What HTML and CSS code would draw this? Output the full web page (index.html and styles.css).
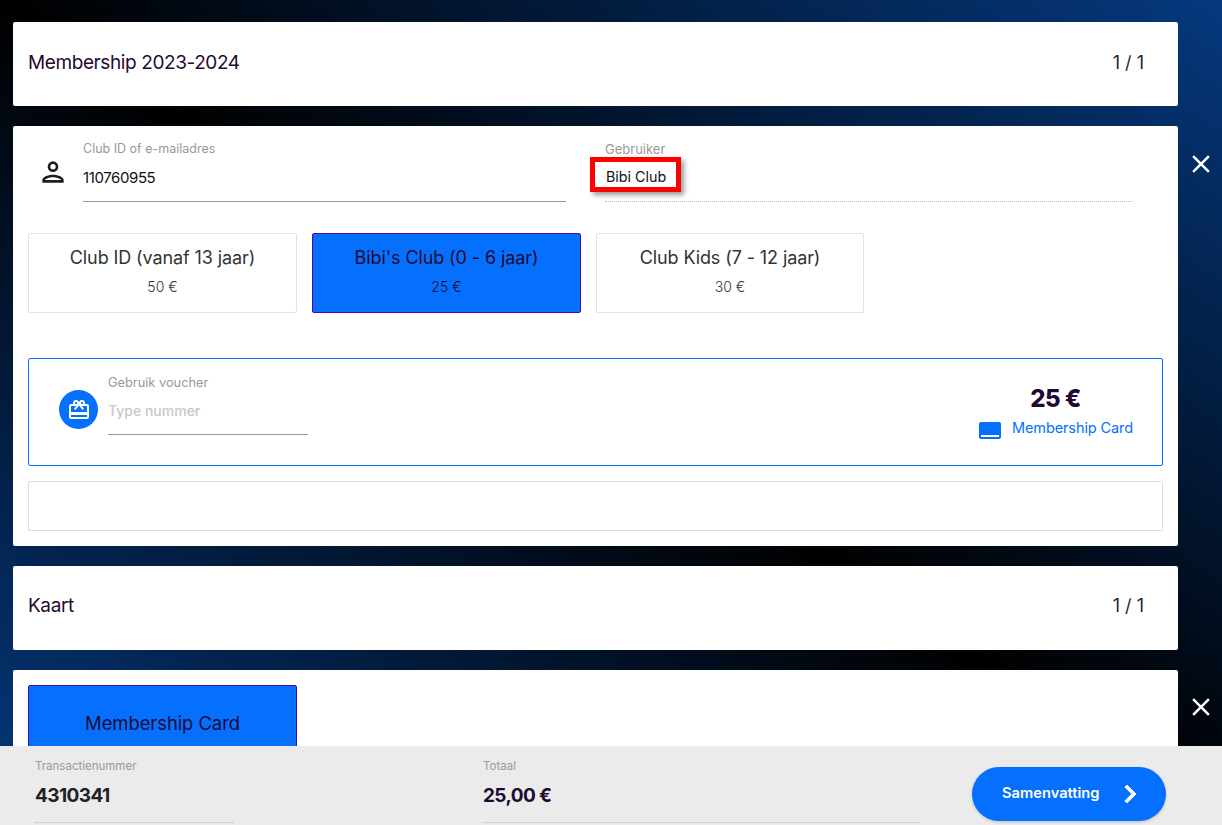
FILE: index.html
```html
<!DOCTYPE html>
<html lang="nl">
<head>
  <meta charset="UTF-8" />
  <title>Membership</title>
  <link rel="stylesheet" href="styles.css">
</head>
<body>

  <div class="content">

    <div class="card section-head">
      <span class="section-title">Membership 2023-2024</span>
      <span class="section-count">1 / 1</span>
    </div>

    <div class="row">
      <div class="card panel">
        <div class="user-row">
          <svg class="person-icon" viewBox="0 0 24 24" width="32" height="32">
            <path fill="#1d1d1d" d="M12 6a2 2 0 1 1 0 4 2 2 0 0 1 0-4m0 10c2.7 0 5.8 1.29 6 2H6c.23-.72 3.31-2 6-2M12 4a4 4 0 1 0 0 8 4 4 0 0 0 0-8zm0 10c-2.67 0-8 1.34-8 4v2h16v-2c0-2.66-5.33-4-8-4z"/>
          </svg>
          <div class="field field-id">
            <label>Club ID of e-mailadres</label>
            <div class="field-value">110760955</div>
          </div>
          <div class="field field-user">
            <label>Gebruiker</label>
            <div class="field-value"><span class="marked">Bibi Club</span></div>
          </div>
        </div>

        <div class="options">
          <div class="option">
            <div class="option-name">Club ID (vanaf 13 jaar)</div>
            <div class="option-price">50 €</div>
          </div>
          <div class="option selected">
            <div class="option-name">Bibi's Club (0 - 6 jaar)</div>
            <div class="option-price">25 €</div>
          </div>
          <div class="option">
            <div class="option-name">Club Kids (7 - 12 jaar)</div>
            <div class="option-price">30 €</div>
          </div>
        </div>

        <div class="voucher">
          <div class="voucher-icon">
            <svg viewBox="0 0 24 24" width="24" height="24">
              <path fill="#fff" d="M20 6h-2.2c.1-.3.2-.7.2-1 0-1.7-1.3-3-3-3-1 0-1.9.5-2.5 1.300L12 4l-.5-.7C10.900 2.500 10 2 9 2 7.300 2 6 3.300 6 5c0 .3.100.7.200 1H4c-1.100 0-2 .9-2 2v11c0 1.100.9 2 2 2h16c1.100 0 2-.9 2-2V8c0-1.100-.9-2-2-2zM15 4c.6 0 1 .4 1 1s-.4 1-1 1-1-.4-1-1 .4-1 1-1zM9 4c.6 0 1 .4 1 1s-.4 1-1 1-1-.4-1-1 .4-1 1-1zm11 15H4v-2h16v2zm0-5H4V8h5.100L7 10.800 8.600 12 12 7.400 15.400 12l1.600-1.200L14.900 8H20v6z"/>
            </svg>
          </div>
          <div class="voucher-field">
            <label>Gebruik voucher</label>
            <div class="voucher-input">Type nummer</div>
          </div>
          <div class="voucher-total">
            <div class="voucher-price">25 €</div>
            <div class="voucher-type">
              <svg viewBox="0 0 24 24" width="24" height="24">
                <path fill="#0570fe" d="M21 4H3c-1.100 0-2 .9-2 2v13c0 1.100.9 2 2 2h18c1.100 0 2-.9 2-2V6c0-1.100-.9-2-2-2zm0 15H3v-2h18v2z"/>
              </svg>
              <span>Membership Card</span>
            </div>
          </div>
        </div>

        <div class="note-box"></div>
      </div>
      <svg class="close-icon" viewBox="0 0 24 24" width="30" height="30">
        <path fill="#fff" d="M19 6.410 17.590 5 12 10.590 6.410 5 5 6.410 10.590 12 5 17.590 6.410 19 12 13.410 17.590 19 19 17.590 13.410 12z"/>
      </svg>
    </div>

    <div class="card section-head section-kaart">
      <span class="section-title">Kaart</span>
      <span class="section-count">1 / 1</span>
    </div>

    <div class="row">
      <div class="card panel panel-card">
        <div class="option selected card-option">
          <div class="option-name">Membership Card</div>
        </div>
      </div>
      <svg class="close-icon" viewBox="0 0 24 24" width="30" height="30">
        <path fill="#fff" d="M19 6.410 17.590 5 12 10.590 6.410 5 5 6.410 10.590 12 5 17.590 6.410 19 12 13.410 17.590 19 19 17.590 13.410 12z"/>
      </svg>
    </div>

  </div>

  <div class="footer">
    <div class="footer-field footer-nr">
      <label>Transactienummer</label>
      <div class="footer-value">4310341</div>
    </div>
    <div class="footer-field footer-total">
      <label>Totaal</label>
      <div class="footer-value purple">25,00 €</div>
    </div>
    <button class="next-btn">
      <span>Samenvatting</span>
      <svg viewBox="0 0 24 24" width="36" height="36">
        <path fill="#fff" stroke="#fff" stroke-width="0.6" d="M10 6 8.590 7.410 13.170 12l-4.580 4.590L10 18l6-6z"/>
      </svg>
    </button>
  </div>

</body>
</html>
```

FILE: styles.css
```css
html, body {
  height: 100%;
  margin: 0;
  overflow: hidden;
}

body {
  font-family: 'Inter', 'Liberation Sans', sans-serif;
  background: linear-gradient(to top right, #05397f 0%, #000 50%, #05397f 100%);
  color: #1f0a33;
}

.content {
  display: flex;
  flex-direction: column;
  gap: 20px;
  padding: 22px 0 0 13px;
}

.card {
  width: 1165px;
  box-sizing: border-box;
  background: #fff;
  border-radius: 2px;
}

.section-head {
  display: flex;
  justify-content: space-between;
  align-items: center;
  height: 84px;
  padding: 0 34px 4px 15px;
  font-size: 19px;
  letter-spacing: -0.4px;
}

.section-kaart {
  padding-bottom: 6px;
}

.section-count {
  font-size: 18px;
  letter-spacing: 0;
  color: #2a2a2a;
}

.row {
  display: flex;
  align-items: flex-start;
}

.close-icon {
  margin: 23px 0 0 8px;
}

.panel-card + .close-icon {
  margin-top: 22px;
}

.panel {
  padding: 15px;
  height: 420px;
}

.panel-card {
  height: 200px;
}

label {
  display: block;
  font-size: 12.500px;
  color: #999;
}

.user-row {
  display: flex;
  align-items: flex-start;
  height: 61px;
}

.person-icon {
  margin: 15px 0 0 9px;
}

.field {
  height: 61px;
  box-sizing: border-box;
  border-bottom: 1px solid #999;
}

.field-id {
  width: 483px;
  margin-left: 14px;
}

.field-user {
  width: 528px;
  margin-left: 39px;
  border-bottom: 1px dotted #bbb;
}

.field-user label {
  font-size: 13px;
}

.field-value {
  margin-top: 12px;
  font-size: 15px;
  letter-spacing: -0.4px;
  color: #111;
}

.field-user .field-value {
  margin-top: 0;
}

.marked {
  display: inline-block;
  margin-left: -15px;
  padding: 6px 10px 2px 11px;
  border: 5px solid #f00;
  box-shadow: 3px 3px 5px rgba(0, 0, 0, 0.4);
  font-size: 14.300px;
  letter-spacing: 0;
}

.options {
  display: flex;
  gap: 15px;
  margin-top: 31px;
}

.option {
  width: 269px;
  height: 80px;
  box-sizing: border-box;
  border: 1px solid #dfe3e8;
  border-radius: 2px;
  text-align: center;
  color: #333;
}

.options .option:last-child {
  width: 268px;
}

.option-name {
  margin-top: 13px;
  font-size: 18px;
  letter-spacing: -0.1px;
}

.option-price {
  margin-top: 10px;
  font-size: 14px;
  font-weight: 300;
}

.selected {
  background: #0570fe;
  border-color: #4b0a9c;
  color: #1f0a33;
}

.card-option {
  height: 120px;
}

.card-option .option-name {
  margin-top: 26px;
  font-size: 18.500px;
}

.voucher {
  display: flex;
  align-items: flex-start;
  height: 108px;
  box-sizing: border-box;
  margin-top: 45px;
  padding: 0 29px 0 30px;
  border: 1px solid #0570fe;
  border-radius: 2px;
}

.voucher-icon {
  display: flex;
  justify-content: center;
  align-items: center;
  width: 39px;
  height: 39px;
  margin-top: 31px;
  border-radius: 50%;
  background: #0570fe;
}

.voucher-field {
  width: 200px;
  height: 76px;
  box-sizing: border-box;
  margin-left: 10px;
  padding-top: 16px;
  border-bottom: 1px solid #999;
}

.voucher-field label {
  font-size: 12.800px;
}

.voucher-input {
  margin-top: 12px;
  font-size: 14px;
  font-weight: 500;
  color: #c8c8c8;
}

.voucher-total {
  margin-left: auto;
  text-align: center;
  padding-top: 25px;
}

.voucher-price {
  margin-bottom: -1px;
  font-size: 24px;
  font-weight: 800;
  letter-spacing: -0.6px;
}

.voucher-type {
  display: flex;
  align-items: center;
  gap: 10px;
  font-size: 14.500px;
  letter-spacing: -0.1px;
  color: #0570fe;
}

.voucher-type svg {
  margin-top: 6px;
}

.note-box {
  height: 50px;
  box-sizing: border-box;
  margin-top: 15px;
  border: 1px solid #ddd;
  border-radius: 2px;
}

.footer {
  position: fixed;
  left: 0;
  right: 0;
  bottom: 0;
  display: flex;
  align-items: flex-start;
  height: 79px;
  box-sizing: border-box;
  background: #ebebeb;
}

.footer-field {
  height: 77px;
  box-sizing: border-box;
  padding-top: 13px;
  border-bottom: 1px dotted #bbb;
}

.footer-field label {
  font-size: 11.500px;
}

.footer-nr {
  width: 198px;
  margin-left: 35px;
}

.footer-total {
  width: 437px;
  margin-left: 250px;
}

.footer-value {
  margin-top: 11px;
  font-size: 19px;
  font-weight: 700;
  letter-spacing: -0.6px;
  color: #222;
}

.purple {
  color: #1f0a33;
}

.next-btn {
  display: flex;
  align-items: center;
  gap: 12px;
  width: 194px;
  height: 54px;
  margin: 21px 0 0 52px;
  padding: 0 0 0 30px;
  border: none;
  border-radius: 27px;
  background: #0570fe;
  color: #fff;
  font-family: inherit;
  font-size: 14.700px;
  font-weight: 600;
  box-shadow: 0 1px 3px rgba(0, 0, 0, 0.2);
}

.next-btn span {
  padding-bottom: 2px;
}
```
